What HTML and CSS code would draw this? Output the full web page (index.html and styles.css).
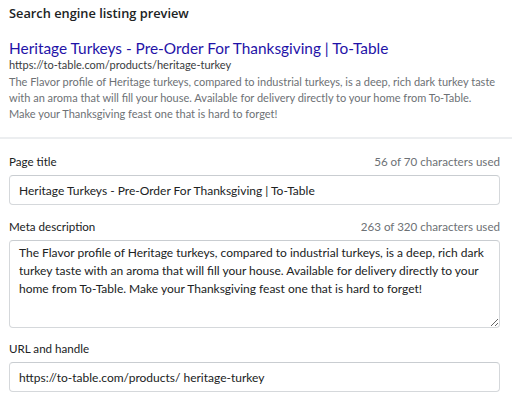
FILE: index.html
```html
<!DOCTYPE html>
<html lang="en">
<head>
<meta charset="utf-8">
<title>Search engine listing preview</title>
<link rel="stylesheet" href="styles.css">
</head>
<body>
<section class="preview">
  <h2 class="heading">Search engine listing preview</h2>
  <div class="serp">
    <a class="serp-title" href="#">Heritage Turkeys - Pre-Order For Thanksgiving | To-Table</a>
    <div class="serp-url">https://to-table.com/products/heritage-turkey</div>
    <p class="serp-desc">The Flavor profile of Heritage turkeys, compared to industrial turkeys, is a deep, rich dark turkey taste with an aroma that will fill your house. Available for delivery directly to your home from To-Table. Make your Thanksgiving feast one that is hard to forget!</p>
  </div>
</section>
<section class="form">
  <div class="field">
    <div class="label-row">
      <label class="label" for="title">Page title</label>
      <span class="count">56 of 70 characters used</span>
    </div>
    <input class="input" id="title" type="text" value="Heritage Turkeys - Pre-Order For Thanksgiving | To-Table">
  </div>
  <div class="field">
    <div class="label-row">
      <label class="label" for="desc">Meta description</label>
      <span class="count">263 of 320 characters used</span>
    </div>
    <textarea class="input textarea" id="desc">The Flavor profile of Heritage turkeys, compared to industrial turkeys, is a deep, rich dark turkey taste with an aroma that will fill your house. Available for delivery directly to your home from To-Table. Make your Thanksgiving feast one that is hard to forget!</textarea>
  </div>
  <div class="field">
    <div class="label-row">
      <label class="label" for="url">URL and handle</label>
    </div>
    <input class="input" id="url" type="text" value="https://to-table.com/products/ heritage-turkey">
  </div>
</section>
</body>
</html>
```
FILE: styles.css
```css
* { box-sizing: border-box; }
html, body { margin: 0; background: #ffffff; }
body {
  font-family: Lato, "Open Sans", sans-serif;
  color: #202223;
  width: 512px;
  overflow: hidden;
}

.preview {
  padding: 5px 12px 15px 9px;
  border-bottom: 2px solid #eceef0;
}
.heading {
  margin: 0 0 17px;
  font-family: "Open Sans", Lato, sans-serif;
  font-size: 12.8px;
  line-height: 16px;
  font-weight: 600;
  color: #202223;
}
.serp { display: flex; flex-direction: column; }
.serp-title {
  font-size: 15.4px;
  line-height: 20px;
  color: #1f13a8;
  text-decoration: none;
  white-space: nowrap;
}
.serp-url {
  font-size: 11px;
  line-height: 14px;
  color: #3a3c3e;
}
.serp-desc {
  margin: 2px 0 0;
  font-size: 11px;
  line-height: 16px;
  color: #6d7175;
}

.form {
  padding: 15px 12px 0 9px;
  display: flex;
  flex-direction: column;
  gap: 13.5px;
}
.field { display: flex; flex-direction: column; gap: 5px; }
.label-row {
  display: flex;
  justify-content: space-between;
  align-items: baseline;
  font-size: 11.6px;
  line-height: 16px;
}
.label { color: #202223; }
.count { color: #6d7175; }

.input {
  display: block;
  width: 100%;
  height: 30px;
  margin: 0;
  padding: 6px 9px;
  font-family: inherit;
  font-size: 12px;
  line-height: 16px;
  color: #202223;
  background: #ffffff;
  border: 1px solid #d5d8db;
  border-top-color: #c9cdd1;
  border-radius: 4px;
  outline: none;
}
.textarea {
  height: 88px;
  padding: 3px 9px;
  line-height: 18px;
  resize: vertical;
  overflow: hidden;
}
```
